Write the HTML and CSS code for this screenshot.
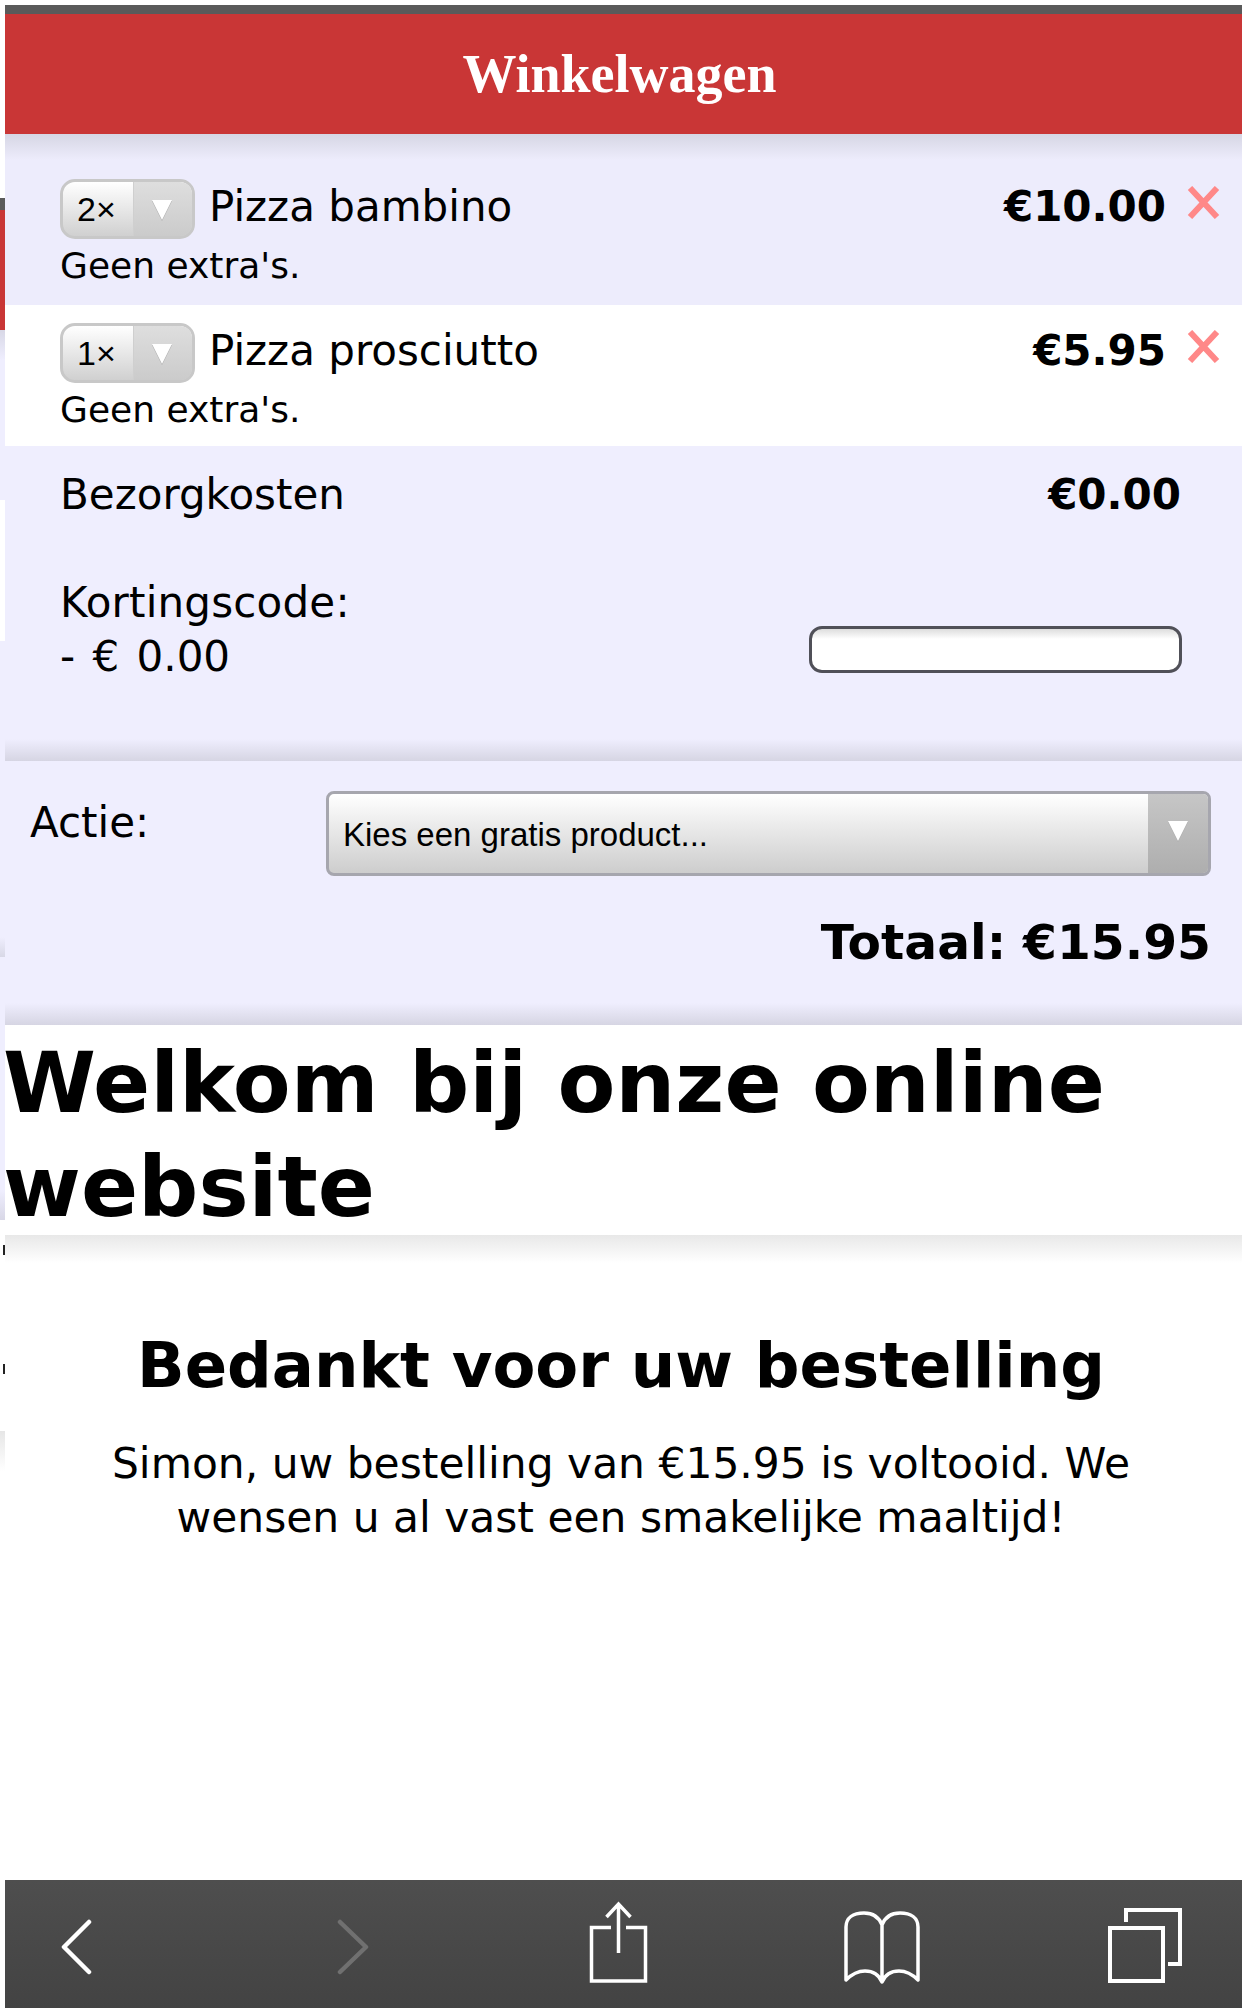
FILE: index.html
```html
<!DOCTYPE html>
<html lang="nl">
<head>
<meta charset="utf-8">
<title>Winkelwagen</title>
<link rel="stylesheet" href="styles.css">
</head>
<body>
<div class="screen">
  <div class="peek" aria-hidden="true">
    <div class="pk-top"></div>
    <div class="pk-grey"></div>
    <div class="pk-red"></div>
    <div class="pk-shade"></div>
    <div class="pk-white"></div>
    <div class="pk-lav"></div>
    <div class="pk-fade"></div>
    <div class="pk-end"></div>
    <div class="pk-blank"><i class="pk-mark"></i><i class="pk-mark pk-mark2"></i></div>
    <div class="pk-low"></div>
  </div>
  <main class="page">
    <div class="page-top"></div>
    <header class="bar"><h1>Winkelwagen</h1></header>
    <section class="cart">
      <div class="item item-a">
        <div class="line">
          <span class="qty"><span class="qty-n">2×</span><span class="qty-a"><i class="tri"></i></span></span>
          <span class="name">Pizza bambino</span>
          <b class="price">€10.00</b>
          <svg class="del" viewBox="0 0 33 33"><path d="M3 2 30 31M30 2 3 31"/></svg>
        </div>
        <div class="extra">Geen extra's.</div>
      </div>
      <div class="item item-b">
        <div class="line">
          <span class="qty"><span class="qty-n">1×</span><span class="qty-a"><i class="tri"></i></span></span>
          <span class="name">Pizza prosciutto</span>
          <b class="price">€5.95</b>
          <svg class="del" viewBox="0 0 33 33"><path d="M3 2 30 31M30 2 3 31"/></svg>
        </div>
        <div class="extra">Geen extra's.</div>
      </div>
      <div class="costs">
        <div class="cost-row"><span>Bezorgkosten</span><b>€0.00</b></div>
        <div class="code-row">
          <div><span class="code-label">Kortingscode:</span><br><span class="code-amount">- € 0.00</span></div>
          <input class="code" type="text" aria-label="Kortingscode">
        </div>
      </div>
    </section>
    <section class="action">
      <div class="action-row">
        <span class="action-label">Actie:</span>
        <div class="select"><span class="select-t">Kies een gratis product...</span><span class="select-a"><i class="tri"></i></span></div>
      </div>
      <div class="total">Totaal: €15.95</div>
    </section>
    <h2 class="welcome">Welkom bij onze online website</h2>
    <section class="thanks">
      <h3>Bedankt voor uw bestelling</h3>
      <p>Simon, uw bestelling van €15.95 is voltooid. We wensen u al vast een smakelijke maaltijd!</p>
    </section>
    <nav class="toolbar">
      <svg viewBox="0 0 32 56" class="ti ti-back"><path d="M28 3 3 28 28 53"/></svg>
      <svg viewBox="0 0 32 56" class="ti ti-next dim"><path d="M3 3 29 28 3 53"/></svg>
      <svg viewBox="0 0 64 86" class="ti ti-share"><path d="M25 27.5H5.5V81H59.5V27.5H40M32.5 53V4M20.5 17 32.5 4 44.5 17"/></svg>
      <svg viewBox="0 0 79 76" class="ti ti-book"><path d="M3 70C9 64 15 61 22 61 30 61 36 65 39 72 42 65 48 61 56 61 63 61 69 64 75 70V17C75 8 68 3 57 3 49 3 42 7 39 15 36 7 29 3 21 3 10 3 3 8 3 17ZM39 15V72"/></svg>
      <svg viewBox="0 0 78 79" class="ti ti-tabs"><path d="M4 22H57V75H4ZM20 16V4H74V58H62"/></svg>
    </nav>
  </main>
</div>
</body>
</html>
```
FILE: styles.css
```css
* { box-sizing: border-box; }
html, body { margin: 0; height: 100%; background: #fff; }
body { font-family: "DejaVu Sans", Verdana, sans-serif; color: #000; }
.screen { display: flex; height: 2008px; width: 1244px; overflow: hidden; }

.peek { width: 5px; flex: none; display: flex; flex-direction: column; }
.pk-top { height: 198px; }
.pk-grey { height: 12px; background: #5a5a5a; }
.pk-red { height: 120px; background: #c93636; }
.pk-shade { height: 170px; background: linear-gradient(#d8d8e6, #efeefe 30px); }
.pk-white { height: 141px; background: #fff; }
.pk-lav { height: 296px; background: #efeefe; }
.pk-fade { height: 20px; background: linear-gradient(#efeefe, #d8d8e6); }
.pk-end { height: 263px; background: linear-gradient(#efeefe 233px, #d8d7e6); }
.pk-blank { height: 211px; display: flex; flex-direction: column; align-items: flex-end; padding-top: 25px; }
.pk-mark { display: block; width: 2px; height: 10px; background: #222; }
.pk-mark2 { margin-top: 109px; }
.pk-low { height: 40px; background: linear-gradient(#e6e6e6, #fff); }

.page { width: 1237px; flex: none; display: flex; flex-direction: column; height: 2008px; }
.page-top { height: 5px; flex: none; }
.bar { height: 129px; flex: none; background: #c93636; border-top: 9px solid #5a5a5a; display: flex; justify-content: center; padding: 30px 8px 0 0; }
.bar h1 { margin: 0; font: bold 54px/60px "Liberation Serif", "Times New Roman", serif; color: #fff; }

.cart { background: #efeefe; }
.item-a { height: 171px; padding: 45px 22px 0 55px; background: linear-gradient(#d6d6e4, #edecfc 26px); }
.item-b { height: 141px; padding: 18px 22px 0 55px; background: #fff; }
.line { display: flex; align-items: center; height: 60px; font-size: 42px; }
.qty { width: 135px; height: 60px; flex: none; display: flex; border: 3px solid #c8c8c8; border-radius: 15px; overflow: hidden; background: linear-gradient(#fff, #d0d0d0); font: 34px/54px "Liberation Sans", Arial, sans-serif; }
.qty-n { width: 70px; padding-left: 14px; }
.qty-a { flex: 1; border-left: 1px solid #cfcfcf; background: linear-gradient(#dedede, #cbcbcb); display: flex; justify-content: center; padding: 18px 3px 0 0; }
.tri { display: block; width: 0; height: 0; border: 10px solid transparent; border-top: 20px solid #fff; border-bottom: 0; filter: drop-shadow(0 1px 0 #a8a8a8); }
.name { margin: 0 0 5px 14px; }
.price { margin: 0 0 5px auto; }
.del { width: 33px; height: 33px; margin: 0 0 14px 21px; flex: none; }
.del path { fill: none; stroke: #ff8888; stroke-width: 6; }
.extra { font-size: 36px; line-height: 44px; margin-top: 5px; }

.costs { height: 315px; padding: 22px 61px 0 55px; font-size: 42px; background: linear-gradient(#efeefe 293px, #d6d5e3); }
.cost-row { display: flex; justify-content: space-between; line-height: 54px; }
.code-row { display: flex; justify-content: space-between; align-items: flex-end; margin-top: 54px; line-height: 54px; }
.code-label { letter-spacing: 0.2px; }
.code-amount { word-spacing: 4px; }
.code { width: 373px; height: 47px; margin: 0 -1px 11px 0; border: 3px solid #505058; border-radius: 13px; background: linear-gradient(#ddd, #fff 10px); padding: 0; }

.action { height: 264px; flex: none; padding: 30px 31px 0 25px; background: linear-gradient(#efeefe 242px, #d6d5e3); }
.action-row { display: flex; align-items: flex-start; }
.action-label { font-size: 42px; line-height: 54px; width: 296px; margin-top: 5px; flex: none; }
.select { flex: 1; height: 85px; display: flex; border: 3px solid #a6a6ae; border-radius: 8px; background: linear-gradient(#fff, #cdcdcd); overflow: hidden; font: 33px/80px "Liberation Sans", Arial, sans-serif; }
.select-t { flex: 1; padding: 1px 0 0 14px; }
.select-a { width: 60px; background: linear-gradient(#c6c6c6, #aeaeae); display: flex; justify-content: center; padding-top: 27px; }
.total { text-align: right; font-weight: bold; font-size: 48.7px; line-height: 60px; margin-top: 36px; }

.welcome { margin: 0 0 0 -2px; flex: none; font-size: 84.3px; word-spacing: 1px; line-height: 104px; height: 210px; padding-top: 6px; font-weight: bold; }

.thanks { flex: 1; text-align: center; padding: 91px 64px 0 59px; background: linear-gradient(#e8e8e8, #fff 28px); }
.thanks h3 { margin: 0; font-size: 62.5px; line-height: 80px; font-weight: bold; }
.thanks p { margin: 31px 0 0; font-size: 42.4px; line-height: 54px; }

.toolbar { height: 128px; flex: none; background: linear-gradient(#4e4e4e, #434343); display: flex; align-items: flex-start; padding-left: 56px; }
.ti { fill: none; stroke: #fff; stroke-width: 3.5; flex: none; }
.ti-back { width: 32px; height: 56px; margin-top: 39px; stroke-linecap: round; stroke-linejoin: round; stroke-width: 4.5; }
.ti-next { width: 32px; height: 56px; margin: 39px 0 0 244px; stroke-linecap: round; stroke-linejoin: round; stroke-width: 4.5; }
.dim { stroke: #707070; }
.ti-share { width: 64px; height: 86px; margin: 20px 0 0 217px; }
.ti-book { width: 79px; height: 76px; margin: 30px 0 0 193px; stroke-linejoin: round; stroke-linecap: round; }
.ti-tabs { width: 78px; height: 79px; margin: 26px 0 0 184px; stroke-width: 4; }
```
